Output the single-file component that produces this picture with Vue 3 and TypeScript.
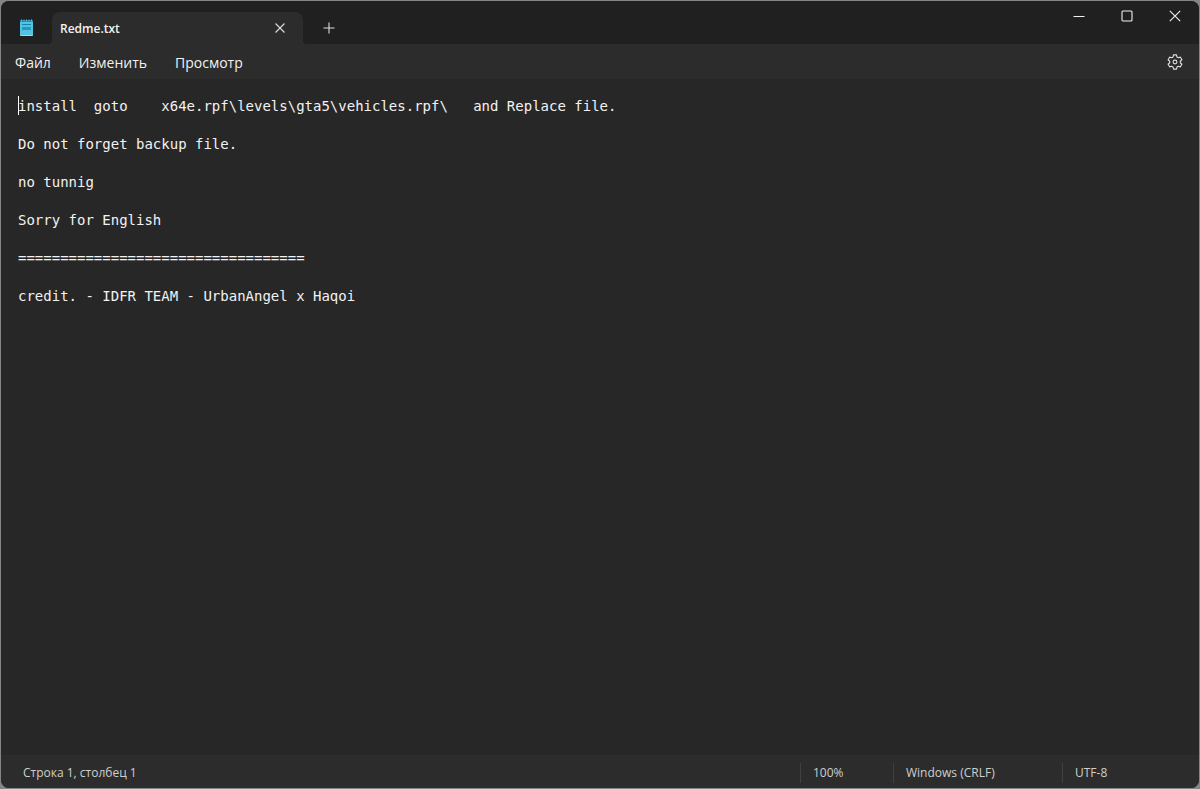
<script setup lang="ts">
import { ref } from 'vue'

const menus: string[] = ['Файл', 'Изменить', 'Просмотр']
const text = ref<string>(
  [
    'install  goto    x64e.rpf\\levels\\gta5\\vehicles.rpf\\   and Replace file.',
    'Do not forget backup file.',
    'no tunnig',
    'Sorry for English',
    '='.repeat(34),
    'credit. - IDFR TEAM - UrbanAngel x Haqoi',
  ].join('\n\n'),
)
</script>

<template>
  <div class="desktop">
    <div class="window">
      <header class="titlebar">
        <svg class="app-icon" width="14" height="18" viewBox="0 0 14 18" aria-hidden="true">
          <rect x="0" y="14" width="13" height="3" rx="1" fill="#d9c9ae" />
          <rect x="0" y="2" width="13" height="14" rx="1" fill="#52c3e2" />
          <rect x="0" y="1" width="13" height="2" fill="#267f9c" />
          <path d="M1.5 0.5v2M4 0.5v2M6.5 0.5v2M9 0.5v2M11.5 0.5v2" stroke="#62bdd5" />
          <path d="M2 5.5h9" stroke="#1683a9" stroke-width="1.2" />
          <rect x="2" y="8" width="9" height="3" fill="#2698bd" />
        </svg>
        <div class="tab">
          <span class="tab-title">Redme.txt</span>
          <button class="icon-button tab-close" type="button" aria-label="Закрыть вкладку">
            <svg width="10" height="10" viewBox="0 0 10 10"><path d="M0.5 0.5l9 9M9.5 0.5l-9 9" /></svg>
          </button>
        </div>
        <button class="icon-button new-tab" type="button" aria-label="Новая вкладка">
          <svg width="12" height="12" viewBox="0 0 12 12"><path d="M6 0.5v11M0.5 6h11" /></svg>
        </button>
        <div class="window-controls">
          <button class="icon-button control" type="button" aria-label="Свернуть">
            <svg width="12" height="12" viewBox="0 0 12 12"><path d="M0.5 6.5h11" /></svg>
          </button>
          <button class="icon-button control" type="button" aria-label="Развернуть">
            <svg width="12" height="12" viewBox="0 0 12 12"><rect x="1" y="1" width="10" height="10" rx="1" /></svg>
          </button>
          <button class="icon-button control" type="button" aria-label="Закрыть">
            <svg width="12" height="12" viewBox="0 0 12 12"><path d="M0.8 0.8l10.4 10.4M11.2 0.8L0.8 11.2" /></svg>
          </button>
        </div>
      </header>

      <nav class="menubar">
        <button v-for="item in menus" :key="item" class="menu" type="button">{{ item }}</button>
        <button class="icon-button settings" type="button" aria-label="Параметры">
          <svg width="16" height="16" viewBox="0 0 16 16">
            <path
              d="M6.5 0.9h3l.5 2.1 1.3.75 2.1-.6 1.5 2.6-1.6 1.5v1.5l1.6 1.5-1.5 2.6-2.1-.6-1.3.75-.5 2.1h-3L6 13l-1.3-.75-2.1.6-1.5-2.6 1.6-1.5v-1.5l-1.6-1.5 1.5-2.6 2.1.6L6 3z"
              stroke-linejoin="round"
            />
            <circle cx="8" cy="8" r="1.9" />
          </svg>
        </button>
      </nav>

      <main class="editor">
        <textarea v-model="text" class="text" aria-label="Текст" spellcheck="false"></textarea>
        <span class="caret" aria-hidden="true"></span>
      </main>

      <footer class="statusbar">
        <span class="position">Строка 1, столбец 1</span>
        <span class="cell zoom">100%</span>
        <span class="cell line-ending">Windows (CRLF)</span>
        <span class="cell encoding">UTF-8</span>
      </footer>
    </div>
  </div>
</template>

<style>
body {
  margin: 0;
  background: #858585;
}
</style>

<style scoped>
.desktop {
  box-sizing: border-box;
  display: flex;
  min-height: 100vh;
  padding: 1px;
  background: #858585;
  font-family: "Open Sans", "Noto Sans", sans-serif;
  color: #f2f2f2;
}

.window {
  flex: 1;
  display: flex;
  flex-direction: column;
  overflow: hidden;
  border-radius: 8px;
  background: #272727;
}

button {
  padding: 0;
  border: 0;
  background: none;
  color: inherit;
  font: inherit;
}

.icon-button {
  display: flex;
  align-items: center;
  justify-content: center;
}

.icon-button svg {
  fill: none;
  stroke: #dedede;
  stroke-width: 1.1;
}

.titlebar {
  display: flex;
  align-items: flex-end;
  height: 43px;
  background: #202020;
}

.app-icon {
  margin: 0 18px 7px 19px;
}

.tab {
  position: relative;
  box-sizing: border-box;
  display: flex;
  align-items: center;
  justify-content: space-between;
  width: 251px;
  height: 32px;
  padding-left: 8px;
  border-radius: 8px 8px 0 0;
  background: #2c2c2c;
}

.tab::before,
.tab::after {
  content: "";
  position: absolute;
  bottom: 0;
  width: 4px;
  height: 4px;
}

.tab::before {
  right: 100%;
  background: radial-gradient(circle at 0 0, #202020 4px, #2c2c2c 4px);
}

.tab::after {
  left: 100%;
  background: radial-gradient(circle at 100% 0, #202020 4px, #2c2c2c 4px);
}

.tab-title {
  padding-top: 2px;
  font-size: 12px;
  line-height: 16px;
  font-weight: 600;
}

.tab-close {
  width: 46px;
  height: 32px;
}

.new-tab {
  width: 52px;
  height: 32px;
}

.window-controls {
  display: flex;
  align-self: flex-start;
  margin-left: auto;
}

.control {
  width: 48px;
  height: 30px;
}

.control svg {
  stroke: #f2f2f2;
}

.menubar {
  display: flex;
  align-items: center;
  gap: 28px;
  height: 35px;
  padding: 0 16px 0 14px;
  background: #2c2c2c;
  font-size: 14px;
  line-height: 20px;
}

.menu {
  padding-top: 2px;
}

.settings {
  margin-left: auto;
}

.editor {
  position: relative;
  flex: 1;
  display: flex;
}

.text {
  flex: 1;
  box-sizing: border-box;
  padding: 18px 17px;
  border: 0;
  outline: 0;
  resize: none;
  overflow: hidden;
  background: transparent;
  color: #f2f2f2;
  font-family: "DejaVu Sans Mono", monospace;
  font-size: 14px;
  line-height: 19px;
}

.caret {
  position: absolute;
  top: 17px;
  left: 17px;
  width: 1px;
  height: 19px;
  background: #ffffff;
}

.statusbar {
  box-sizing: border-box;
  display: flex;
  align-items: center;
  height: 33px;
  padding: 2px 0 0 22px;
  background: #2c2c2c;
  color: #cfcfcf;
  font-size: 12px;
  line-height: 20px;
}

.position {
  flex: 1;
}

.cell {
  box-sizing: border-box;
  padding-left: 12px;
  border-left: 1px solid #404040;
}

.zoom {
  width: 93px;
}

.line-ending {
  width: 169px;
}

.encoding {
  width: 137px;
}
</style>
